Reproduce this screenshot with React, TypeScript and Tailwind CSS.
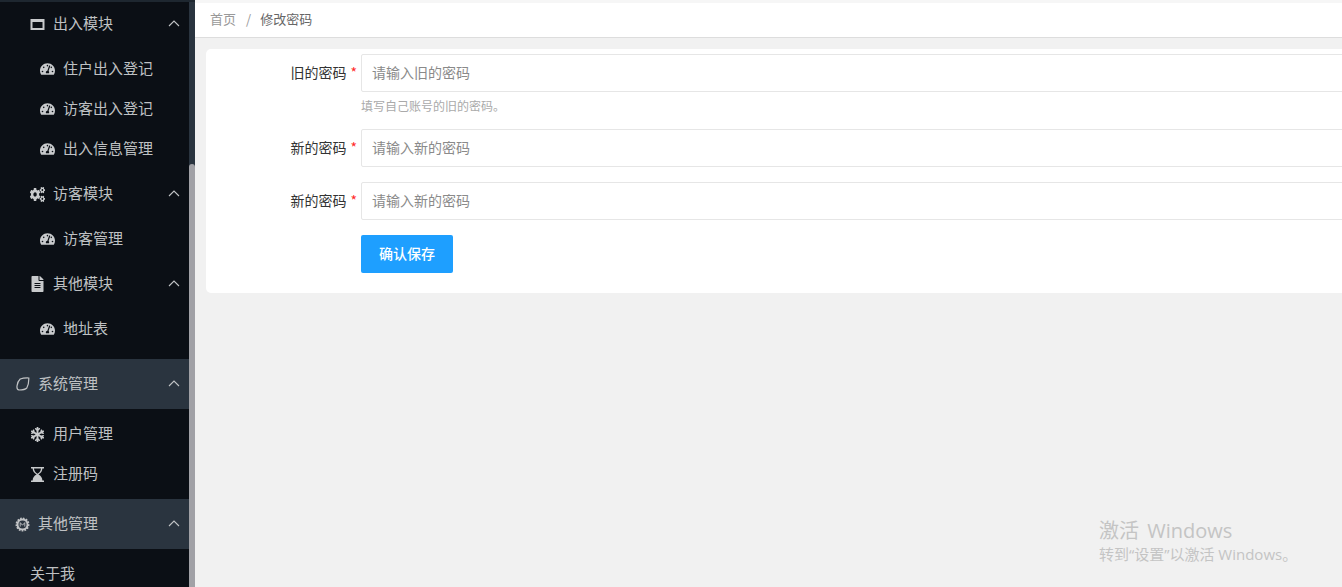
import React from "react";
import { FaTachometerAlt, FaCogs, FaFileAlt, FaSnowflake } from "react-icons/fa";

const font = { fontFamily: '"Noto Sans CJK SC", "Liberation Sans", sans-serif' };

function Chevron() {
  return (
    <svg width="12" height="7" viewBox="0 0 12 7" fill="none" stroke="#c2c4c6" strokeWidth="1.1" className="ml-auto mr-[9px] mt-[-2px] shrink-0">
      <path d="M1 6 L6 1 L11 6" />
    </svg>
  );
}

function Sub({ label }: { label: string }) {
  return (
    <div className="flex h-10 items-center pl-10 text-[15px] text-[#bfc1c3]">
      <FaTachometerAlt className="h-[16px] w-[15px] text-[#c8cacc]" />
      <span className="mb-[2px] ml-[8px]">{label}</span>
    </div>
  );
}

function Group({ icon, label }: { icon: React.ReactNode; label: string }) {
  return (
    <div className="flex h-[50px] items-center pl-[30px] text-[15px] text-[#bfc1c3]">
      <span className="flex w-[15px] justify-center text-[#c8cacc]">{icon}</span>
      <span className="mb-[2px] ml-[8px]">{label}</span>
      <Chevron />
    </div>
  );
}

function Top({ icon, label }: { icon: React.ReactNode; label: string }) {
  return (
    <div className="flex h-[50px] items-center bg-[#2a343f] pl-[15px] text-[15px] text-[#bfc1c3]">
      <span className="flex w-[15px] justify-center">{icon}</span>
      <span className="mb-[2px] ml-[8px]">{label}</span>
      <Chevron />
    </div>
  );
}

function Leaf({ icon, label }: { icon?: React.ReactNode; label: string }) {
  return (
    <div className="flex h-10 items-center pl-[30px] text-[15px] text-[#bfc1c3]">
      {icon && <span className="mr-[8px] flex w-[15px] justify-center text-[#c8cacc]">{icon}</span>}
      <span className="mb-[2px]">{label}</span>
    </div>
  );
}

function Field({ label, placeholder, hint }: { label: string; placeholder: string; hint?: string }) {
  return (
    <div>
      <div className="flex items-center">
        <div className="mb-[2px] w-[155px] shrink-0 pr-[4px] text-right text-sm text-[#333333]">
          {label}
          <span className="ml-[4px] text-[#ff2a2a]">*</span>
        </div>
        <div className="box-border flex h-[38px] min-w-0 flex-1 items-center rounded-[2px] border border-[#e6e6e6] bg-white pl-[10px] text-sm text-[#8a8a8a]">
          <span className="mb-[2px]">{placeholder}</span>
        </div>
      </div>
      {hint && <div className="ml-[155px] mt-[5px] h-[18px] text-xs leading-[18px] text-[#aaaaaa]">{hint}</div>}
    </div>
  );
}

export default function App() {
  return (
    <div className="relative flex h-[587px] w-[1342px] overflow-hidden bg-[#f1f1f1]" style={font}>
      <aside className="flex h-full w-[195px] shrink-0 flex-col overflow-hidden bg-[#0b0f15]">
        <div className="h-[2px] shrink-0 bg-[#1e2730]" />
        <div className="flex min-h-0 flex-1">
          <div className="mt-[-3px] w-[189px] shrink-0">
            <Group
              icon={
                <svg width="15" height="13" viewBox="0 0 15 13">
                  <path fillRule="evenodd" fill="#c8cacc" d="M0.5 1 H14.5 V12 H0.5 Z M2.5 4 V10 H12.5 V4 Z" />
                </svg>
              }
              label="出入模块"
            />
            <Sub label="住户出入登记" />
            <Sub label="访客出入登记" />
            <Sub label="出入信息管理" />
            <Group icon={<FaCogs preserveAspectRatio="none" className="h-[15px] w-[15px]" />} label="访客模块" />
            <Sub label="访客管理" />
            <Group icon={<FaFileAlt className="h-[16px] w-[13px]" />} label="其他模块" />
            <Sub label="地址表" />
            <div className="h-[10px]" />
            <Top
              icon={
                <svg width="14" height="14" viewBox="0 0 14 14" fill="none" stroke="#c2c4c6" strokeWidth="1.2">
                  <path d="M4.2 2 Q7.5 0.8 12.8 1 Q13 7 10.8 11 Q8.8 13 3 13 Q0.6 12.5 1 9 Q1.5 4.5 4.2 2 Z" />
                </svg>
              }
              label="系统管理"
            />
            <div className="h-[5px]" />
            <Leaf icon={<FaSnowflake className="h-[15px] w-[15px]" />} label="用户管理" />
            <Leaf
              icon={
                <svg width="13" height="15" viewBox="0 0 13 15">
                  <path fill="#c8cacc" d="M0 0 H13 V1.6 H11.4 Q11.2 5.5 7.4 7.5 Q11.2 9.5 11.4 13.4 H13 V15 H0 V13.4 H1.6 Q1.8 9.5 5.6 7.5 Q1.8 5.5 1.6 1.6 H0 Z" />
                  <path fill="#0b0f15" d="M3 1.6 H10 Q9.8 5 6.5 6.8 Q3.2 5 3 1.6 Z" />
                </svg>
              }
              label="注册码"
            />
            <div className="h-[5px]" />
            <Top
              icon={
                <svg width="15" height="15" viewBox="0 0 15 15">
                  <circle cx="7.5" cy="7.5" r="6" fill="#c2c4c6" stroke="#c2c4c6" strokeWidth="2" strokeDasharray="1.6 1.2" />
                  <circle cx="7.5" cy="7.5" r="4" fill="#2a343f" />
                  <path d="M5.2 9.6 V5.6 L7.5 8.2 L9.8 5.6 V9.6" fill="none" stroke="#c2c4c6" strokeWidth="0.9" />
                </svg>
              }
              label="其他管理"
            />
            <div className="h-[5px]" />
            <Leaf label="关于我" />
          </div>
          <div className="flex w-[6px] shrink-0 flex-col bg-[#2a343f]">
            <div className="h-[162px] shrink-0" />
            <div className="flex-1 rounded-t-[3px] bg-[#a1a1a6]" />
          </div>
        </div>
      </aside>
      <main className="flex min-w-0 flex-1 flex-col">
        <div className="h-[3px] shrink-0 bg-[#f6f6f6]" />
        <div className="flex h-[35px] shrink-0 items-center border-b border-[#dddddd] bg-white pl-[15px] text-[13px]">
          <span className="mb-[2px] text-[#999999]">首页</span>
          <span className="mb-[2px] ml-[10px] mr-[9px] text-[#999999]">/</span>
          <span className="mb-[2px] text-[#666666]">修改密码</span>
        </div>
        <div className="ml-[11px] mt-[11px] mr-[-20px] box-border flex h-[244px] flex-col rounded-[5px] bg-white pt-[5px]">
          <Field label="旧的密码" placeholder="请输入旧的密码" hint="填写自己账号的旧的密码。" />
          <div className="mt-[14px]">
            <Field label="新的密码" placeholder="请输入新的密码" />
          </div>
          <div className="mt-[15px]">
            <Field label="新的密码" placeholder="请输入新的密码" />
          </div>
          <div className="ml-[155px] mt-[15px] flex h-[38px] w-[92px] items-center justify-center rounded-[2px] bg-[#1e9fff] text-sm font-medium text-white">
            <span className="mb-[2px]">确认保存</span>
          </div>
        </div>
      </main>
      <div className="absolute left-[1099px] top-[516px] text-[#c4c4c4]" style={{ fontFamily: '"Open Sans", "Noto Sans CJK SC", sans-serif' }}>
        <div className="whitespace-nowrap text-xl leading-[29px] [word-spacing:3px]">激活 Windows</div>
        <div className="whitespace-nowrap text-[15px] leading-[18px]">转到“设置”以激活 Windows。</div>
      </div>
    </div>
  );
}
